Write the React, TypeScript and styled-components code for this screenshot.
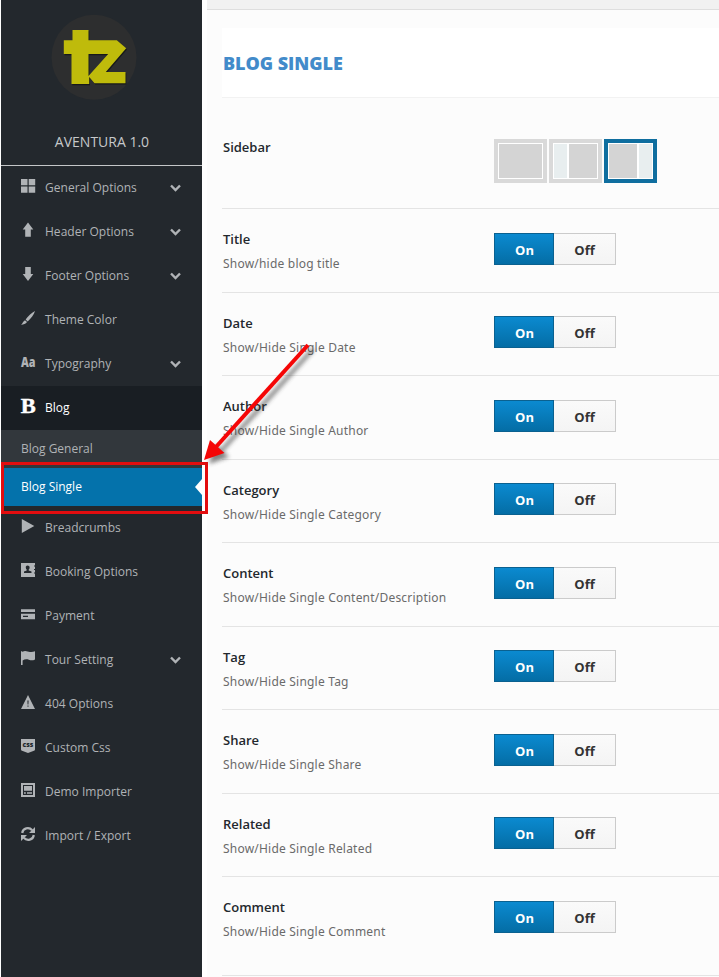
import React from "react";
import styled, { createGlobalStyle, css } from "styled-components";

const GlobalStyle = createGlobalStyle`
  * { box-sizing: border-box; }
  body { margin: 0; background: #fff; font-family: "Open Sans", sans-serif; }
`;

const Page = styled.div`
  position: relative;
  display: flex;
  width: 719px;
  height: 977px;
  padding-left: 1px;
  overflow: hidden;
  background: #fff;
`;

const Sidebar = styled.nav`
  width: 201px;
  flex: none;
  background: #23282d;
`;

const Brand = styled.div`
  display: flex;
  flex-direction: column;
  align-items: center;
  height: 166px;
  padding-top: 14px;
  border-bottom: 1px solid #c4c6c8;
`;

const Logo = styled.svg`
  display: block;
  width: 86px;
  height: 86px;
  margin-right: 16px;
`;

const BrandName = styled.div`
  margin-top: 32px;
  padding-left: 1px;
  font-size: 14px;
  line-height: 20px;
  color: #c6c8ca;
`;

const MenuItem = styled.div<{ $active?: boolean }>`
  display: flex;
  align-items: center;
  height: 44px;
  padding: 0 21px 0 20px;
  font-size: 12px;
  color: ${(p) => (p.$active ? "#fff" : "#b0b3b6")};
  background: ${(p) => (p.$active ? "#191e23" : "transparent")};
`;

const IconSlot = styled.svg`
  width: 14px;
  height: 16px;
  margin: 0 10px 4px 0;
  fill: currentColor;
  overflow: visible;
`;

const MenuText = styled.span`
  flex: 1;
  line-height: 18px;
  letter-spacing: 0.02px;
`;

const Chevron = styled.svg`
  width: 11px;
  height: 8px;
  margin-bottom: 1px;
  fill: none;
  stroke: #b0b3b6;
  stroke-width: 2.4;
`;

const SubItem = styled.div<{ $selected?: boolean }>`
  display: flex;
  align-items: center;
  justify-content: space-between;
  height: 38px;
  padding-left: 20px;
  font-size: 12px;
  line-height: 18px;
  color: #b0b3b6;
  background: #32373c;
  ${(p) =>
    p.$selected &&
    css`
      color: #fff;
      background: #0472ab;
    `}
`;

const Pointer = styled.svg`
  width: 7px;
  height: 16px;
  fill: #fff;
`;

const Main = styled.main`
  flex: 1;
  min-width: 0;
  margin-left: 5px;
  background: #fcfcfc;
`;

const TopBar = styled.div`
  height: 10px;
  background: #f1f1f1;
  border-bottom: 1px solid #dedede;
`;

const Content = styled.div`
  padding: 18px 0 0 15px;
`;

const Heading = styled.h1`
  display: flex;
  align-items: center;
  height: 70px;
  margin: 0;
  padding-left: 1px;
  background: #fff;
  border-bottom: 1px solid #f2f2f2;
  font-size: 18px;
  font-weight: 800;
  letter-spacing: -0.05px;
  color: #428bca;
`;

const Field = styled.section<{ $kind?: "layout" | "last" }>`
  display: flex;
  height: ${(p) => (p.$kind === "layout" ? 111 : p.$kind === "last" ? 99 : 83.5)}px;
  padding-top: ${(p) => (p.$kind === "layout" ? 41 : 23.8)}px;
  border-bottom: 1px solid #e4e4e4;
`;

const Info = styled.div<{ $layout?: boolean }>`
  width: 272px;
  padding-left: 1px;
  margin-top: ${(p) => (p.$layout ? -2 : -3.8)}px;
`;

const Label = styled.div`
  font-size: 13px;
  font-weight: 600;
  line-height: 20px;
  color: #23282d;
`;

const Description = styled.div`
  margin-top: 5px;
  font-family: "Noto Sans", "Open Sans", sans-serif;
  font-size: 12px;
  line-height: 20px;
  letter-spacing: 0.21px;
  color: #6a6a6a;
`;

const Toggle = styled.div`
  display: flex;
  width: 122px;
  height: 32px;
`;

const ToggleButton = styled.button<{ $on?: boolean }>`
  width: ${(p) => (p.$on ? 60 : 62)}px;
  height: 32px;
  padding: ${(p) => (p.$on ? "2px 0 0 1px" : "2px 0 0")};
  border: 1px solid ${(p) => (p.$on ? "#0a6190" : "#cbcbcb")};
  border-left-width: ${(p) => (p.$on ? 1 : 0)}px;
  font: 700 13px "Open Sans", sans-serif;
  color: ${(p) => (p.$on ? "#fff" : "#333")};
  background: ${(p) => (p.$on ? "linear-gradient(#0b8ad0, #046da5)" : "linear-gradient(#fafafa, #f4f4f4)")};
`;

const Layouts = styled.div`
  display: flex;
  gap: 2px;
`;

const LayoutOption = styled.div<{ $selected?: boolean }>`
  display: flex;
  gap: 2px;
  width: 53px;
  height: 44px;
  padding: 1px;
  background: #fff;
  border: 4px solid ${(p) => (p.$selected ? "#0f6e9f" : "#d9d9d9")};
`;

const Pane = styled.div<{ $side?: boolean }>`
  flex: ${(p) => (p.$side ? "0 0 13px" : "1")};
  background: ${(p) => (p.$side ? "#e8eeef" : "#d4d4d4")};
`;

const Highlight = styled.div`
  position: absolute;
  left: 1px;
  top: 462px;
  width: 207px;
  height: 52px;
  border: 3px solid #e30d0f;
`;

const Arrow = styled.svg`
  position: absolute;
  left: 196px;
  top: 335px;
  width: 130px;
  height: 140px;
`;

const icons: Record<string, React.ReactNode> = {
  grid: <path d="M0 1h6.500v6.200H0zM7.700 1h6.500v6.200H7.700zM0 8.500h6.500v6.200H0zM7.700 8.500h6.500v6.200H7.700z" />,
  up: <path d="M7 0.500 12.300 7.600H9.800V14.800H4.200V7.600H1.700z" />,
  down: <path d="M7 15 12.300 8H9.800V1H4.200V8H1.700z" />,
  brush: <path d="M14 1C11 2.500 7 6 4.600 9.500L6.700 11.400C10 8.500 13 4.500 14 1zM4 10.300 6 12.100C4.800 13.800 2.500 14.800 0 15 1.500 13.900 2 11.200 4 10.300z" />,
  type: (
    <text x="0" y="13" fontFamily="Open Sans" fontSize="14.500" fontWeight="800" textLength="14.500" lengthAdjust="spacingAndGlyphs">Aa</text>
  ),
  bold: (
    <text x="-0.300" y="15" fontFamily="Liberation Serif" fontSize="21.500" fontWeight="700" stroke="currentColor" strokeWidth="0.400" textLength="15" lengthAdjust="spacingAndGlyphs">B</text>
  ),
  play: <path d="M0.800 1 13.300 8 0.800 15z" />,
  book: (
    <path fillRule="evenodd" d="M0 1h14v2.500h-1v1h1v2.500h-1v1h1v2.500h-1v1h1V15H0zM6.500 3.500c-1.300 0-1.900 1-1.700 2.200.1.900.5 1.500.9 1.900v.8L3 9.600V11h7.500V9.600L7.700 8.400v-.8c.5-.4.800-1 .9-1.900.2-1.200-.6-2.200-2.100-2.200z" />
  ),
  card: <path fillRule="evenodd" d="M0 3.300h14V6H0zM0 7.700h14V13.300H0zM2 9.700v1.200h5V9.700z" />,
  flag: <path d="M0 1.300h1.300v.7C4-.2 6.500 1.500 9 2c2 .3 3.500-.3 5-.8v8.300c-2 1.100-4 1.100-6.200.3C5.600 9 3.500 9.300 1.600 10.500V15H0z" />,
  alert: <path fillRule="evenodd" d="M7 1 14 15H0zM6.400 6.500l.2 4h.8l.2-4zM6.500 11.600v1.200h1v-1.200z" />,
  css: (
    <>
      <path d="M0 1h14v10.300c0 1-.7 1.500-1.700 1.700L7 15l-5.300-2C.7 12.800 0 12.300 0 11.300z" />
      <text x="1.600" y="8.700" fill="#23282d" fontFamily="Open Sans" fontSize="6.500" fontWeight="800" textLength="10.800" lengthAdjust="spacingAndGlyphs">css</text>
    </>
  ),
  demo: <path fillRule="evenodd" d="M0 1h14v14H0zM2 3v10h10V3zM3 4h8v4.800H3zM3 10.200h1.800v1.600H3zM6 10.200h5v1.600H6z" />,
  refresh: (
    <>
      <path d="M1.200 7C1.800 2 8 .5 11.200 4.200M12.800 9c-.6 5-6.800 6.500-10 2.800" fill="none" stroke="currentColor" strokeWidth="2.200" />
      <path d="M14 1v6H8zM0 15V9H6z" />
    </>
  ),
};

type Entry = { name: string; icon: string; open?: boolean; active?: boolean };

const before: Entry[] = [
  { name: "General Options", icon: "grid", open: true },
  { name: "Header Options", icon: "up", open: true },
  { name: "Footer Options", icon: "down", open: true },
  { name: "Theme Color", icon: "brush" },
  { name: "Typography", icon: "type", open: true },
  { name: "Blog", icon: "bold", active: true },
];

const after: Entry[] = [
  { name: "Breadcrumbs", icon: "play" },
  { name: "Booking Options", icon: "book" },
  { name: "Payment", icon: "card" },
  { name: "Tour Setting", icon: "flag", open: true },
  { name: "404 Options", icon: "alert" },
  { name: "Custom Css", icon: "css" },
  { name: "Demo Importer", icon: "demo" },
  { name: "Import / Export", icon: "refresh" },
];

const fields = [
  ["Title", "Show/hide blog title"],
  ["Date", "Show/Hide Single Date"],
  ["Author", "Show/Hide Single Author"],
  ["Category", "Show/Hide Single Category"],
  ["Content", "Show/Hide Single Content/Description"],
  ["Tag", "Show/Hide Single Tag"],
  ["Share", "Show/Hide Single Share"],
  ["Related", "Show/Hide Single Related"],
  ["Comment", "Show/Hide Single Comment"],
];

function Item({ name, icon, open, active }: Entry) {
  return (
    <MenuItem $active={active}>
      <IconSlot viewBox="0 0 14 16">{icons[icon]}</IconSlot>
      <MenuText>{name}</MenuText>
      {open && (
        <Chevron viewBox="0 0 11 8">
          <path d="M1 1.500 5.500 6 10 1.500" />
        </Chevron>
      )}
    </MenuItem>
  );
}

export default function App() {
  return (
    <>
      <GlobalStyle />
      <Page>
        <Sidebar>
          <Brand>
            <Logo viewBox="50.500 14 86 86">
              <circle cx="93.500" cy="57.200" r="42.500" fill="#2d2e2f" />
              <path
                d="M72 30H88V40.300H116.300L125.700 48.300 105.300 72H125V83.300H94L88.700 77V84H71V54H63.300V40.300H72zM88 54V76L107.700 54z"
                fill="#17191a"
                transform="translate(.8 1.200)"
              />
              <path
                d="M72 30H88V40.300H116.300L125.700 48.300 105.300 72H125V83.300H94L88.700 77V84H71V54H63.300V40.300H72zM88 54V76L107.700 54z"
                fill="#bfbb0b"
                fillRule="evenodd"
              />
            </Logo>
            <BrandName>AVENTURA 1.0</BrandName>
          </Brand>
          {before.map((e) => (
            <Item key={e.name} {...e} />
          ))}
          <SubItem>Blog General</SubItem>
          <SubItem $selected>
            Blog Single
            <Pointer viewBox="0 0 7 16">
              <path d="M7 0v16L0 8z" />
            </Pointer>
          </SubItem>
          {after.map((e) => (
            <Item key={e.name} {...e} />
          ))}
        </Sidebar>
        <Main>
          <TopBar />
          <Content>
            <Heading>BLOG SINGLE</Heading>
            <Field $kind="layout">
              <Info $layout>
                <Label>Sidebar</Label>
              </Info>
              <Layouts>
                <LayoutOption>
                  <Pane />
                </LayoutOption>
                <LayoutOption>
                  <Pane $side />
                  <Pane />
                </LayoutOption>
                <LayoutOption $selected>
                  <Pane />
                  <Pane $side />
                </LayoutOption>
              </Layouts>
            </Field>
            {fields.map(([label, text], i) => (
              <Field key={label} $kind={i === fields.length - 1 ? "last" : undefined}>
                <Info>
                  <Label>{label}</Label>
                  <Description>{text}</Description>
                </Info>
                <Toggle>
                  <ToggleButton $on>On</ToggleButton>
                  <ToggleButton>Off</ToggleButton>
                </Toggle>
              </Field>
            ))}
          </Content>
        </Main>
        <Highlight />
        <Arrow viewBox="196 335 130 140">
          <defs>
            <filter id="soft" x="-20%" y="-20%" width="140%" height="140%">
              <feGaussianBlur stdDeviation="2" />
            </filter>
          </defs>
          <g transform="translate(5 4)" opacity="0.600" filter="url(#soft)">
            <path d="M308 345 217 446" stroke="#333" strokeWidth="4" />
            <path d="M204 460 210 440 224 453z" fill="#333" />
          </g>
          <path d="M308 345 215 448" stroke="#f50606" strokeWidth="4" />
          <path d="M204 460 210 440 224.500 453z" fill="#f50606" />
        </Arrow>
      </Page>
    </>
  );
}
